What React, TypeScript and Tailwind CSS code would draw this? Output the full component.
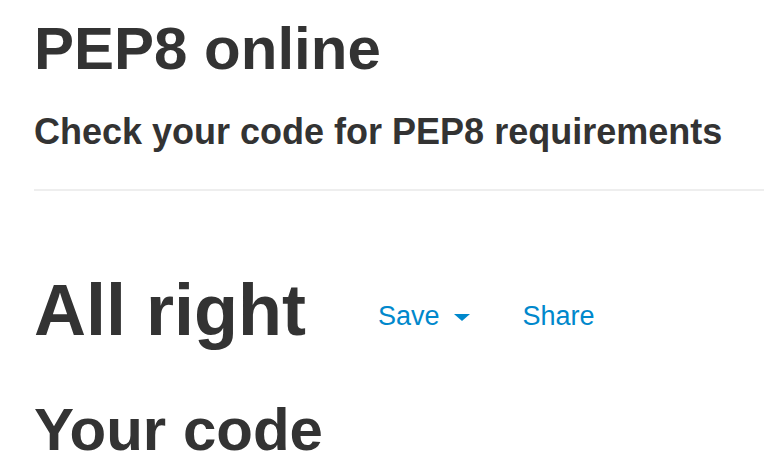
export default function App() {
  return (
    <div
      className="min-h-screen bg-white pl-[34px] pt-[16px] text-[#333333]"
      style={{ fontFamily: '"Liberation Sans", Arial, sans-serif' }}
    >
      {/* Header */}
      <h1 className="text-[60px] font-bold leading-[1.1]">PEP8 online</h1>
      <h3 className="mt-[30px] text-[36px] font-bold leading-[1.1]">
        Check your code for PEP8 requirements
      </h3>
      <hr className="mt-[37px] border-t-2 border-[#eeeeee]" />

      {/* Result */}
      <div className="mt-[80px] flex items-center">
        <h1 className="text-[72px] font-bold leading-[1.1]">All right</h1>
        <div className="ml-[72px] mt-[13px] flex items-center text-[27px] leading-[1.4] text-[#0088cc]">
          <a href="#" className="flex items-center">
            Save
            <span className="ml-[14px] mt-[2px] h-0 w-0 border-x-[8px] border-t-[7px] border-x-transparent border-t-[#0088cc]" />
          </a>
          <a href="#" className="ml-[53px]">
            Share
          </a>
        </div>
      </div>

      <h1 className="mt-[47px] text-[60px] font-bold leading-[1.1]">Your code</h1>
    </div>
  );
}
